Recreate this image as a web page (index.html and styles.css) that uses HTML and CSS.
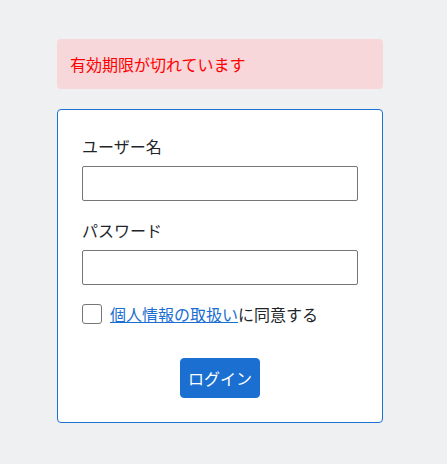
FILE: index.html
```html
<!DOCTYPE html>
<html lang="ja">
<head>
<meta charset="utf-8">
<title>ログイン</title>
<link rel="stylesheet" href="styles.css">
</head>
<body>
<div class="page">
  <div class="alert">有効期限が切れています</div>
  <form class="card">
    <div class="group">
      <label class="label" for="user">ユーザー名</label>
      <input class="input" id="user" type="text">
    </div>
    <div class="group">
      <label class="label" for="pass">パスワード</label>
      <input class="input" id="pass" type="password">
    </div>
    <div class="check-row">
      <input class="check" type="checkbox" id="agree">
      <label for="agree"><a class="link" href="#">個人情報の取扱い</a>に同意する</label>
    </div>
    <div class="actions">
      <button class="btn" type="button">ログイン</button>
    </div>
  </form>
</div>
</body>
</html>
```
FILE: styles.css
```css
html, body {
  margin: 0;
  padding: 0;
  background: #eef0f2;
}
body {
  font-family: "Noto Sans CJK JP", "Noto Sans", sans-serif;
  font-size: 16px;
  line-height: 24px;
  color: #212529;
}
.page {
  width: 326px;
  margin-left: 57px;
  padding-top: 39px;
}
.alert {
  background: #f8d7da;
  color: #ff0000;
  border: 1px solid transparent;
  border-radius: 4px;
  padding: 12px;
  margin-bottom: 20px;
}
.card {
  margin: 0;
  background: #fff;
  border: 1px solid #1b6fd0;
  border-radius: 4px;
  padding: 24px;
}
.group {
  display: flex;
  flex-direction: column;
  margin-bottom: 17px;
}
.label {
  margin-bottom: 8px;
}
.input {
  box-sizing: border-box;
  height: 35px;
  width: 100%;
  margin: 0;
  border: 1px solid #767676;
  border-radius: 2px;
  padding: 4px 8px;
  font: inherit;
}
.check-row {
  display: flex;
  align-items: center;
  gap: 8px;
  height: 24px;
}
.check {
  appearance: none;
  -webkit-appearance: none;
  box-sizing: border-box;
  width: 20px;
  height: 20px;
  margin: 0;
  border: 1px solid #767676;
  border-radius: 3px;
  background: #fff;
}
.link {
  color: #1b6fd0;
  text-decoration: underline;
}
.actions {
  display: flex;
  justify-content: center;
  margin-top: 32px;
}
.btn {
  box-sizing: border-box;
  width: 80px;
  height: 40px;
  padding: 0;
  font: inherit;
  color: #fff;
  background: #1b6fd0;
  border: 1px solid #1b6fd0;
  border-radius: 4px;
}
```
